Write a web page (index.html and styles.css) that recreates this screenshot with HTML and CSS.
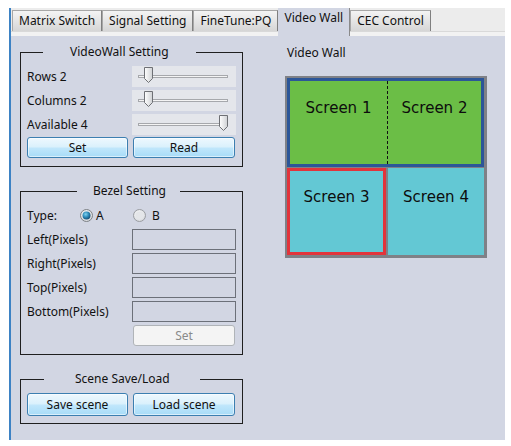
FILE: index.html
```html
<!DOCTYPE html>
<html>
<head>
<meta charset="utf-8">
<link rel="stylesheet" href="styles.css">
</head>
<body>
<svg class="defs" width="0" height="0" aria-hidden="true">
  <defs>
    <linearGradient id="thumbFill" x1="0" y1="0" x2="1" y2="0">
      <stop offset="0" stop-color="#ffffff"/>
      <stop offset="1" stop-color="#cfd1d4"/>
    </linearGradient>
    <radialGradient id="dotFill" cx="0.4" cy="0.35" r="0.7">
      <stop offset="0" stop-color="#7fd3f0"/>
      <stop offset="0.55" stop-color="#2a86b5"/>
      <stop offset="1" stop-color="#17476b"/>
    </radialGradient>
    <radialGradient id="ringFill" cx="0.45" cy="0.4" r="0.7">
      <stop offset="0" stop-color="#ffffff"/>
      <stop offset="1" stop-color="#cfd2d6"/>
    </radialGradient>
  </defs>
</svg>
<div class="app">
  <div class="tabs">
    <div class="tab">Matrix Switch</div>
    <div class="tab">Signal Setting</div>
    <div class="tab">FineTune:PQ</div>
    <div class="tab active">Video Wall</div>
    <div class="tab">CEC Control</div>
  </div>
  <div class="panel">
    <div class="left">
      <fieldset class="group g1">
        <legend>VideoWall Setting</legend>
        <div class="form">
          <span class="lbl">Rows 2</span>
          <div class="slider">
            <svg width="104" height="21" viewBox="0 0 104 21">
              <rect x="6.5" y="9.5" width="89" height="2" fill="#f4f4f4" stroke="#a6a8ac" stroke-width="1"/>
              <polygon points="12.5,1.5 20.5,1.5 20.5,12.5 16.5,16.5 12.5,12.5" fill="url(#thumbFill)" stroke="#6e7075" stroke-width="1"/>
            </svg>
          </div>
          <span class="lbl">Columns 2</span>
          <div class="slider">
            <svg width="104" height="21" viewBox="0 0 104 21">
              <rect x="6.5" y="9.5" width="89" height="2" fill="#f4f4f4" stroke="#a6a8ac" stroke-width="1"/>
              <polygon points="12.5,1.5 20.5,1.5 20.5,12.5 16.5,16.5 12.5,12.5" fill="url(#thumbFill)" stroke="#6e7075" stroke-width="1"/>
            </svg>
          </div>
          <span class="lbl">Available 4</span>
          <div class="slider">
            <svg width="104" height="21" viewBox="0 0 104 21">
              <rect x="6.5" y="9.5" width="89" height="2" fill="#f4f4f4" stroke="#a6a8ac" stroke-width="1"/>
              <polygon points="87.5,1.5 95.5,1.5 95.5,12.5 91.5,16.5 87.5,12.5" fill="url(#thumbFill)" stroke="#6e7075" stroke-width="1"/>
            </svg>
          </div>
        </div>
        <div class="btns">
          <button class="btn">Set</button>
          <button class="btn">Read</button>
        </div>
      </fieldset>

      <fieldset class="group g2">
        <legend>Bezel Setting</legend>
        <div class="form">
          <div class="type">
            <span class="type-lbl">Type:</span>
            <span class="radio">
              <svg width="13" height="13" viewBox="0 0 13 13">
                <circle cx="6.5" cy="6.5" r="6" fill="url(#ringFill)" stroke="#7c8085" stroke-width="1"/>
                <circle cx="6.5" cy="6.5" r="4" fill="url(#dotFill)"/>
              </svg>
              <span>A</span>
            </span>
          </div>
          <div class="type">
            <span class="radio">
              <svg width="13" height="13" viewBox="0 0 13 13">
                <circle cx="6.5" cy="6.5" r="6" fill="url(#ringFill)" stroke="#9a9da2" stroke-width="1"/>
                <circle cx="6.5" cy="6.5" r="4" fill="#e4e6e9"/>
              </svg>
              <span>B</span>
            </span>
          </div>
          <span class="lbl">Left(Pixels)</span>
          <div class="field"></div>
          <span class="lbl">Right(Pixels)</span>
          <div class="field"></div>
          <span class="lbl">Top(Pixels)</span>
          <div class="field"></div>
          <span class="lbl">Bottom(Pixels)</span>
          <div class="field"></div>
          <span></span>
          <button class="btn disabled">Set</button>
        </div>
      </fieldset>

      <fieldset class="group g3">
        <legend>Scene Save/Load</legend>
        <div class="btns tall">
          <button class="btn">Save scene</button>
          <button class="btn">Load scene</button>
        </div>
      </fieldset>
    </div>

    <div class="right">
      <div class="wall-title">Video Wall</div>
      <div class="wall">
        <div class="wall-top">
          <div class="scr">Screen 1</div>
          <div class="sep"></div>
          <div class="scr">Screen 2</div>
        </div>
        <div class="wall-bottom">
          <div class="scr cyan sel">Screen 3</div>
          <div class="scr cyan">Screen 4</div>
        </div>
      </div>
    </div>
  </div>
</div>
</body>
</html>
```

FILE: styles.css
```css
* { box-sizing: border-box; }

html, body {
  margin: 0;
  padding: 0;
  background: #ffffff;
}

body {
  font-family: "Noto Sans", "Open Sans", sans-serif;
  font-size: 12px;
  line-height: 14px;
  color: #111111;
}

.defs {
  position: absolute;
  width: 0;
  height: 0;
}

.app {
  margin: 8px 0 0 9px;
  width: 496px;
  height: 432px;
  border-left: 2px solid #3d82c4;
  display: flex;
  flex-direction: column;
}

.tabs {
  height: 28px;
  display: flex;
  align-items: flex-start;
  gap: 0;
  padding-left: 1px;
  background: linear-gradient(to bottom, #ececec 0, #ececec 23px, #d9d9d9 23px, #d9d9d9 24px, #f2f2f2 24px, #f2f2f2 28px);
}

.tab {
  margin-top: 2px;
  height: 21px;
  padding: 0 6px;
  display: flex;
  align-items: center;
  border: 1px solid #a7a7a7;
  border-bottom: none;
  border-right-color: #7f7f7f;
  background: linear-gradient(to bottom, #f4f4f4, #d6d6d6);
  white-space: nowrap;
}

.tab.active {
  margin-top: 0;
  height: 28px;
  align-items: flex-start;
  padding-top: 3px;
  border: none;
  border-right: 1px solid #8a8a8a;
  background: #d2d6e3;
}

.panel {
  flex: 1;
  display: flex;
  padding-left: 9px;
  background: #d2d6e3;
}

.left {
  width: 223px;
  display: flex;
  flex-direction: column;
}

.group {
  margin: 17px 0 0 0;
  padding: 7px 6px 8px 6px;
  border: 1px solid #1f1f1f;
  min-width: 0;
}

.g1 { margin-top: 9px; }
.g3 { padding-bottom: 7px; }

legend {
  line-height: 14px;
  height: 14px;
}

.g1 legend { margin-left: 16px; padding: 0 27px; }
.g2 legend { margin-left: 50px; padding: 0 14px 0 16px; }
.g3 legend { margin-left: 17px; padding: 0 30px 0 31px; }

.form {
  display: grid;
  grid-template-columns: 1fr 104px;
  grid-auto-rows: 21px;
  row-gap: 3px;
}

.lbl {
  display: flex;
  align-items: center;
  white-space: nowrap;
}

.slider {
  background: #e4e6eb;
  display: flex;
}

.field {
  border: 1px solid #6c7079;
  height: 21px;
}

.type {
  display: flex;
  align-items: center;
}

.type-lbl {
  width: 53px;
}

.radio {
  display: flex;
  align-items: center;
  gap: 3px;
}

.radio svg { display: block; }

.type + .type .radio { margin-left: 1px; gap: 6px; }

.btns {
  margin-top: 2px;
  display: grid;
  grid-template-columns: 101px 102px;
  column-gap: 5px;
  height: 21px;
}

.btns.tall {
  margin-top: 0;
  height: 23px;
}

.btn {
  font: inherit;
  color: #111111;
  margin: 0;
  padding: 0;
  border: 1px solid #3c7fb1;
  border-radius: 3px;
  background: linear-gradient(to bottom, #eef8fe 0%, #dbf1fc 45%, #bfe6fb 55%, #a8dcf8 100%);
  box-shadow: inset 0 0 0 1px rgba(255, 255, 255, 0.55);
}

.btn.disabled {
  margin-left: 1px;
  width: 102px;
  color: #8a8a8a;
  border-color: #b0b4b8;
  background: #f4f4f4;
  box-shadow: none;
}

.right {
  margin-left: 42px;
  display: flex;
  flex-direction: column;
}

.wall-title {
  margin-top: 10px;
  padding-left: 2px;
}

.wall {
  margin-top: 16px;
  width: 202px;
  border-style: solid;
  border-color: #7f8187;
  border-width: 2px 3px 3px 2px;
  background: #7f8187;
  font-family: "DejaVu Sans", Verdana, sans-serif;
  font-size: 15px;
  line-height: 18px;
  color: #0d0d0d;
}

.wall-top {
  height: 89px;
  border: 3px solid #2c5698;
  background: #6bbe46;
  display: grid;
  grid-template-columns: 97px 1px 1fr;
}

.sep {
  border-left: 1px dashed #111111;
}

.scr {
  text-align: center;
  padding-top: 18px;
  white-space: nowrap;
}

.wall-bottom {
  margin-top: 1px;
  height: 87px;
  display: grid;
  grid-template-columns: 99px 1fr;
  column-gap: 2px;
}

.cyan {
  background: #63c8d4;
  padding-top: 20px;
}

.cyan.sel {
  border: 3px solid #e2343b;
  padding-top: 17px;
}
```
